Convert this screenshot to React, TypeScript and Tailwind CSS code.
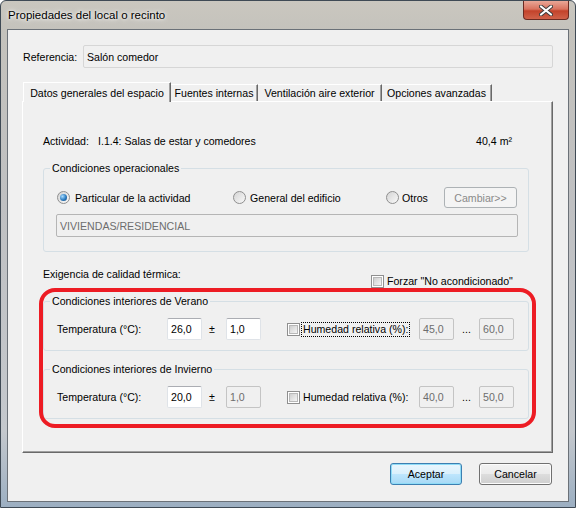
import React from "react";
import clsx from "clsx";

function Radio({ checked = false }: { checked?: boolean }) {
  return (
    <span className="flex h-[13px] w-[13px] shrink-0 items-center justify-center rounded-full border border-[#8f8f8f] bg-[linear-gradient(135deg,#d4d4d4,#f9f9f9)]">
      {checked && (
        <span className="h-[7px] w-[7px] rounded-full bg-[radial-gradient(circle_at_35%_35%,#a8dcff,#2a7bc0_55%,#0f3f72)]" />
      )}
    </span>
  );
}

function Check() {
  return (
    <span className="flex h-[13px] w-[13px] shrink-0 items-center justify-center border border-[#8f8f8f] bg-white">
      <span className="h-[9px] w-[9px] border border-[#b8b8b8] bg-[linear-gradient(135deg,#cfcfcf,#f5f5f5)]" />
    </span>
  );
}

function Box({
  value,
  disabled = false,
  className,
}: {
  value: string;
  disabled?: boolean;
  className?: string;
}) {
  return (
    <div
      className={clsx(
        "flex h-[22px] shrink-0 items-center rounded-[2px] border pl-[3px]",
        disabled
          ? "border-[#c4c4c4] bg-[#f0f0f0] text-[#6d6d6d]"
          : "border-[#dfe3e8] border-t-[#abadb3] bg-white",
        className
      )}
    >
      {value}
    </div>
  );
}

function TempRow({ temp, tol, tolDisabled, hMin, hMax, focus }: {
  temp: string;
  tol: string;
  tolDisabled?: boolean;
  hMin: string;
  hMax: string;
  focus?: boolean;
}) {
  return (
    <div className="mt-[10px] ml-[13px] flex items-center">
      <span className="w-[110px]">Temperatura (°C):</span>
      <Box value={temp} className="w-[35px]" />
      <span className="w-[24px] pl-[7px]">±</span>
      <Box value={tol} disabled={tolDisabled} className="w-[35px]" />
      <div className="ml-[26px] flex w-[132px] items-center">
        <Check />
        <span
          className={clsx(
            "ml-[1px] px-[1px] leading-[13px]",
            focus ? "border border-dotted border-black" : "border border-transparent"
          )}
        >
          Humedad relativa (%):
        </span>
      </div>
      <Box value={hMin} disabled className="w-[35px]" />
      <span className="w-[25px] text-center">...</span>
      <Box value={hMax} disabled className="w-[35px]" />
    </div>
  );
}

export default function App() {
  const tabs = [
    { label: "Fuentes internas", w: "w-[87px]" },
    { label: "Ventilación aire exterior", w: "w-[124px]" },
    { label: "Opciones avanzadas", w: "w-[110px]" },
  ];

  return (
    <div className="h-[508px] w-[576px] font-['Liberation_Sans',Arial,sans-serif] text-[10.6px] leading-[14px] text-black">
      <div className="flex h-full w-full flex-col rounded-t-[6px] border border-[#3f4a55] bg-[linear-gradient(180deg,#cac7bf_0%,#c4c2bc_6%,#bfc0c2_40%,#c4c8cd_85%,#9cafc2_100%)] px-[6px] pb-[5px]">
        {/* title bar */}
        <div className="flex h-[28px] shrink-0 items-start justify-between">
          <span className="mt-[7px] pl-px text-[11.5px] [text-shadow:0_0_6px_#fff,0_0_3px_#fff]">
            Propiedades del local o recinto
          </span>
          <div className="flex h-[19px] w-[46px] items-center justify-center rounded-b-[4px] border border-t-0 border-[#6b2b22] bg-[linear-gradient(180deg,#e9a797_0%,#d9735f_45%,#c3432b_55%,#d0624a_100%)]">
            <svg width="14" height="11" viewBox="0 0 14 11">
              <path d="M2 1.5 L12 9.5 M12 1.5 L2 9.5" stroke="#3b3b3b" strokeWidth="4" strokeLinecap="round" />
              <path d="M2 1.5 L12 9.5 M12 1.5 L2 9.5" stroke="#ffffff" strokeWidth="2.2" strokeLinecap="round" />
            </svg>
          </div>
        </div>

        {/* client area */}
        <div className="flex flex-1 flex-col border border-[#6b7178] bg-[#f0f0f0] px-[14px]">
          <div className="mt-[15px] flex h-[23px] items-center">
            <span className="w-[61px] pl-px">Referencia:</span>
            <Box value="Salón comedor" className="h-[23px] w-[470px] !border-[#d6d6d6] !bg-[#f0f0f0]" />
          </div>

          {/* tabs */}
          <div className="mt-[14px] flex h-[19px] items-end pl-px">
            <div className="relative z-10 mb-[-1px] flex h-[20px] w-[148px] items-center justify-center border-t border-l border-r border-t-white border-l-white border-r-[#696969] bg-[#f0f0f0] shadow-[inset_-1px_0_0_#a0a0a0]">
              Datos generales del espacio
            </div>
            {tabs.map((t) => (
              <div
                key={t.label}
                className={clsx(
                  "flex h-[17px] items-center justify-center border-t border-r border-t-white border-r-[#696969] shadow-[inset_-1px_0_0_#a0a0a0]",
                  t.w
                )}
              >
                {t.label}
              </div>
            ))}
          </div>

          {/* panel */}
          <div className="relative flex h-[352px] w-[531px] flex-col border border-t-white border-l-white border-r-[#696969] border-b-[#696969] pt-[32px] pl-[20px] shadow-[inset_-1px_-1px_0_#a0a0a0]">
            <div className="flex w-[469px] justify-between">
              <span>
                <span className="inline-block w-[55px]">Actividad:</span>
                I.1.4: Salas de estar y comedores
              </span>
              <span>40,4 m²</span>
            </div>

            <fieldset className="mt-[13px] w-[486px] rounded-[3px] border border-[#d5dfe5] pb-[14px]">
              <legend className="ml-[6px] px-[2px]">Condiciones operacionales</legend>
              <div className="mt-[12px] ml-[13px] flex h-[21px] items-center">
                <div className="flex w-[176px] items-center gap-[5px]">
                  <Radio checked />
                  <span>Particular de la actividad</span>
                </div>
                <div className="flex w-[153px] items-center gap-[4px]">
                  <Radio />
                  <span>General del edificio</span>
                </div>
                <div className="flex w-[58px] items-center gap-[3px]">
                  <Radio />
                  <span>Otros</span>
                </div>
                <button className="h-[21px] w-[73px] rounded-[3px] border border-[#adb2b5] bg-[#f4f4f4] text-[#8a8a8a]">
                  Cambiar&gt;&gt;
                </button>
              </div>
              <Box
                value="VIVIENDAS/RESIDENCIAL"
                disabled
                className="mt-[6px] ml-[12px] h-[23px] w-[462px] !border-[#b5b5b5]"
              />
            </fieldset>

            <div className="mt-[15px] flex h-[21px] w-[486px] items-start">
              <span className="w-[328px]">Exigencia de calidad térmica:</span>
              <div className="flex items-center gap-[3px] self-end">
                <Check />
                <span>Forzar "No acondicionado"</span>
              </div>
            </div>

            <fieldset className="mt-[6px] w-[486px] rounded-[3px] border border-[#d5dfe5] pb-[10px]">
              <legend className="ml-[6px] px-[2px]">Condiciones interiores de Verano</legend>
              <TempRow temp="26,0" tol="1,0" hMin="45,0" hMax="60,0" focus />
            </fieldset>

            <fieldset className="mt-[11px] w-[486px] rounded-[3px] border border-[#d5dfe5] pb-[10px]">
              <legend className="ml-[6px] px-[2px]">Condiciones interiores de Invierno</legend>
              <TempRow temp="20,0" tol="1,0" tolDisabled hMin="40,0" hMax="50,0" />
            </fieldset>

            {/* red highlight */}
            <div className="pointer-events-none absolute top-[186px] left-[16px] h-[140px] w-[497px] rounded-[16px] border-[4px] border-[#ed1c24]" />
          </div>

          {/* buttons */}
          <div className="mt-[10px] flex w-[531px] justify-end gap-[17px] pr-px">
            <button className="h-[22px] w-[72px] rounded-[3px] border border-[#3c7fb1] bg-[linear-gradient(180deg,#eaf6fd_0%,#d9f0fc_50%,#bee6fd_50%,#a7d9f5_100%)] shadow-[inset_0_0_0_1px_#8fdcf7]">
              Aceptar
            </button>
            <button className="h-[22px] w-[73px] rounded-[3px] border border-[#707070] bg-[linear-gradient(180deg,#f2f2f2_0%,#ebebeb_50%,#dddddd_50%,#cfcfcf_100%)] shadow-[inset_0_0_0_1px_#fcfcfc]">
              Cancelar
            </button>
          </div>
        </div>
      </div>
    </div>
  );
}
